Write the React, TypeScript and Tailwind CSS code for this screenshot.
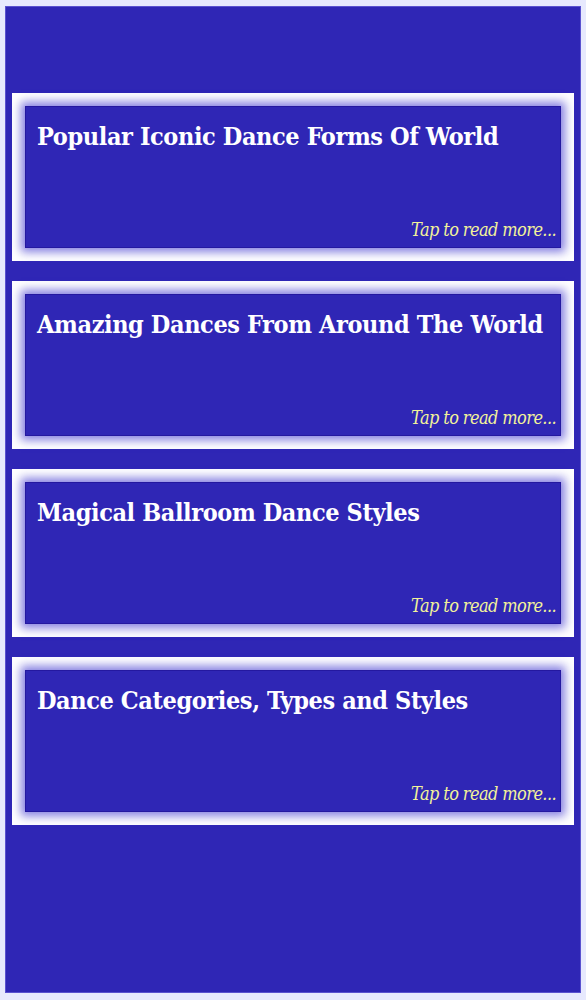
import React from 'react'

const cards = [
  'Popular Iconic Dance Forms Of World',
  'Amazing Dances From Around The World',
  'Magical Ballroom Dance Styles',
  'Dance Categories, Types and Styles',
]

function Card({ title }: { title: string }) {
  return (
    <div className="h-[168px] bg-white p-[13px]">
      <div className="flex h-full flex-col justify-between border border-[#2418a0] bg-[#2f26b5] pt-[13px] pr-[4px] pb-[6px] pl-[11px] shadow-[0_0_9px_4px_rgba(100,92,216,0.8)]">
        <h2 className="font-['DejaVu_Serif',serif] font-stretch-condensed text-[25px] leading-[34px] font-bold tracking-[-0.4px] whitespace-nowrap text-white">
          {title}
        </h2>
        <p className="text-right font-['DejaVu_Serif',serif] font-stretch-condensed text-[18px] italic leading-[22px] tracking-[-0.6px] text-[#f2f29a]">
          Tap to read more...
        </p>
      </div>
    </div>
  )
}

export default function App() {
  return (
    <div className="h-[1000px] w-[586px] bg-[#e7e9fd] pt-[6px] pr-[5px] pb-[7px] pl-[5px]">
      <div className="flex h-full flex-col gap-[20px] border border-[#5a52cf] bg-[#2f26b5] px-[6px] pt-[86px]">
        {cards.map((t) => (
          <Card key={t} title={t} />
        ))}
      </div>
    </div>
  )
}
